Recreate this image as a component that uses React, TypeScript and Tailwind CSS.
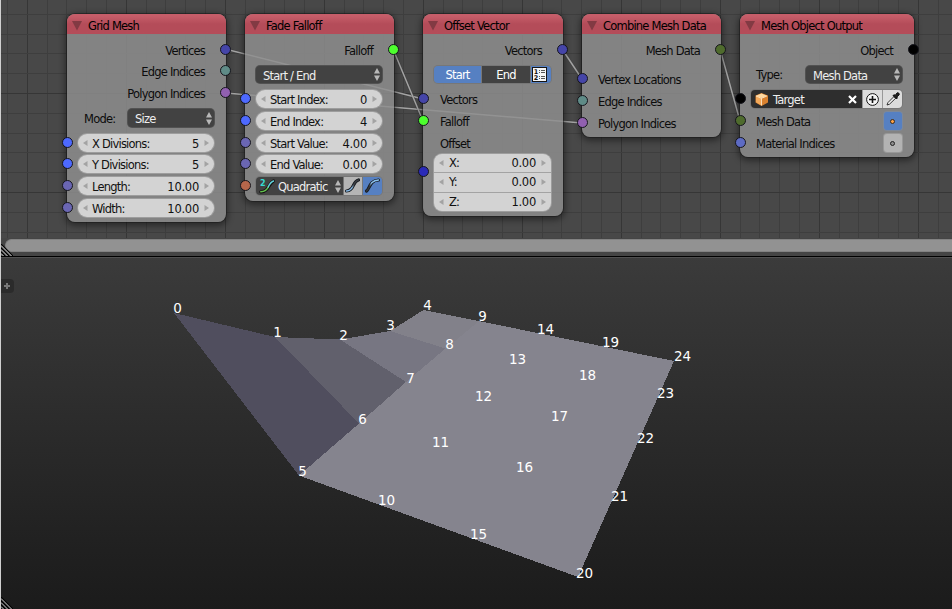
import type { ReactNode } from "react";

const COLORS = {
  vector: "#4545a8",
  teal: "#5f8b87",
  purple: "#9160b0",
  int: "#4d69ff",
  float: "#6a66b3",
  green: "#4dff2e",
  orange: "#b5664b",
  mesh: "#4f6b2d",
  black: "#000000",
  material: "#5d6bc4",
};

function Socket({ side, color }: { side: "l" | "r"; color: string }) {
  return (
    <span
      className={`absolute top-1/2 -mt-[7px] size-[11px] rounded-full border border-[#15151c] ${side === "l" ? "-left-[5px]" : "-right-[5px]"}`}
      style={{ backgroundColor: color }}
    />
  );
}

function Row({ className = "", children }: { className?: string; children: ReactNode }) {
  return <div className={`relative flex h-5 shrink-0 items-center ${className}`}>{children}</div>;
}

function Node({ title, className, children }: { title: string; className: string; children: ReactNode }) {
  return (
    <section
      className={`absolute top-[14px] flex flex-col rounded-[8px] bg-[#8f8f8f]/84 shadow-[0_0_0_1px_rgba(20,20,20,.45),0_2px_6px_2px_rgba(0,0,0,.42)] ${className}`}
    >
      <header className="flex h-5 shrink-0 items-center rounded-t-[8px] bg-linear-to-b from-[#c65d69] from-10% to-[#b44c59] to-50%">
        <svg className="ml-[5px] mt-[4px] size-[10px]" viewBox="0 0 10 10">
          <path d="M0 0H10L5 9.5Z" fill="#823a43" />
        </svg>
        <h2 className="ml-[6px] mt-[4px] text-black">{title}</h2>
      </header>
      {children}
    </section>
  );
}

function Arrow({ flip = false }: { flip?: boolean }) {
  return (
    <svg className="h-[6px] w-[5px] shrink-0" viewBox="0 0 5 6">
      <path d={flip ? "M0.5 0V6L5 3Z" : "M4.5 0V6L0 3Z"} fill="#a3a3a3" />
    </svg>
  );
}

function NumField({ label, value }: { label: string; value: string }) {
  return (
    <div className="mb-[2px] flex h-[18px] flex-1 items-center rounded-full bg-[#d3d3d3] px-[5px] text-[#111] shadow-[0_0_0_1px_#9d9d9d]">
      <Arrow />
      <span className="ml-[4px] mt-[2px]">{label}</span>
      <span className="ml-auto mr-[5px] mt-[2px] tracking-[-.25px]">{value}</span>
      <Arrow flip />
    </div>
  );
}

function UpDown() {
  return (
    <svg className="h-[13px] w-[6px] shrink-0" viewBox="0 0 6 13">
      <path d="M3 0L6 5.5H0ZM3 13L6 7.5H0Z" fill="#b8b8b8" />
    </svg>
  );
}

function Select({ label, className }: { label: string; className: string }) {
  return (
    <div className={`flex items-center rounded-[4px] bg-[#424242] pr-[2px] pl-[7px] text-[#eee] shadow-[0_0_0_1px_#525252] ${className}`}>
      <span className="mt-[2px]">{label}</span>
      <span className="ml-auto flex"><UpDown /></span>
    </div>
  );
}

function Curve({ d, id, from, to }: { d: string; id: string; from: string; to: string }) {
  return (
    <svg className="size-[17px]" viewBox="0 0 17 17" fill="none" strokeLinecap="round">
      <defs>
        <linearGradient id={id} x1="0" y1="1" x2="1" y2="0">
          <stop offset=".35" stopColor={from} />
          <stop offset=".6" stopColor={to} />
        </linearGradient>
      </defs>
      <path d={d} stroke="#15191f" strokeWidth="3.2" />
      <path d={d} stroke={`url(#${id})`} strokeWidth="1.5" />
    </svg>
  );
}

const grid = {
  x: Array.from({ length: 49 }, (_, i) => ({ at: Math.floor(126.3 + (i - 6) * 19.8), major: (i - 6) % 5 === 0 })),
  y: Array.from({ length: 12 }, (_, i) => ({ at: Math.floor(93.5 + (i - 4) * 19.82), major: (i - 4) % 5 === 0 })),
};

const links = ["M225 49L423 99", "M225 93L582 123", "M393 49L423 121", "M562 49L582 79", "M720 49L740 121"];

const faces = [
  { points: "299,475.5 357,421 404,379 444,346 479,321 674,361 578,577", fill: "#85848e" },
  { points: "390,331 423.5,310 479,321 445.5,349", fill: "#82818a" },
  { points: "340,339.5 390,331 445.5,348.5 406,382", fill: "#777682" },
  { points: "275,337 340,339.5 406,382 359,423.5", fill: "#61606c" },
  { points: "174,313 275,337 359,423.5 299,475.5", fill: "#504e5e" },
];

const vertexLabels = [
  [177, 308], [277, 332], [343, 335], [390, 325], [427, 305], [302, 471], [362, 419], [410, 378], [449, 344],
  [482, 316], [386, 500], [440, 442], [483, 396], [517, 359], [545, 329], [478, 534], [524, 467], [559, 416],
  [587, 375], [610, 342], [584, 573], [619, 496], [645, 438], [665, 393], [682, 356],
];

function GripCorner({ className }: { className: string }) {
  return (
    <svg className={`absolute left-px size-[12px] ${className}`} viewBox="0 0 12 12">
      <path d="M0 0L12 12M0 4L8 12M0 8L4 12" stroke="#000" strokeWidth="1.2" />
      <path d="M0 1.5L10.5 12M0 5.5L6.5 12M0 9.5L2.5 12" stroke="#c4c4c4" strokeWidth="1" />
    </svg>
  );
}

function NodeEditor() {
  return (
    <div className="relative h-[256px] shrink-0 overflow-hidden bg-[#484848]">
      <svg className="absolute inset-0" width="952" height="238" shapeRendering="crispEdges">
        {grid.x.map((l) => (
          <rect key={`x${l.at}`} x={l.at} y="0" width="1" height="238" fill={l.major ? "#363636" : "#3e3e3e"} />
        ))}
        {grid.y.map((l) => (
          <rect key={`y${l.at}`} x="0" y={l.at} width="952" height="1" fill={l.major ? "#363636" : "#3e3e3e"} />
        ))}
      </svg>
      <svg className="absolute inset-0" width="952" height="238" fill="none">
        {links.map((d) => (
          <g key={d}>
            <path d={d} stroke="#333" strokeOpacity=".4" strokeWidth="2.5" />
            <path d={d} stroke="#a4a4a4" strokeWidth="1.5" />
          </g>
        ))}
      </svg>

      <Node title="Grid Mesh" className="left-[67px] h-[208px] w-[159px]">
        <Row className="mt-[7px] justify-end pr-[21px]">Vertices<Socket side="r" color={COLORS.vector} /></Row>
        <Row className="mt-px justify-end pr-[21px]">Edge Indices<Socket side="r" color={COLORS.teal} /></Row>
        <Row className="mt-[2px] justify-end pr-[21px]">Polygon Indices<Socket side="r" color={COLORS.purple} /></Row>
        <Row className="mt-[5px] pl-[17px]">
          <span>Mode:</span>
          <Select label="Size" className="mr-[12px] mb-[2px] ml-auto h-[18px] w-[86px]" />
        </Row>
        <Row className="mt-[5px] pr-[12px] pl-[11px]"><NumField label="X Divisions:" value="5" /><Socket side="l" color={COLORS.int} /></Row>
        <Row className="mt-px pr-[12px] pl-[11px]"><NumField label="Y Divisions:" value="5" /><Socket side="l" color={COLORS.int} /></Row>
        <Row className="mt-[2px] pr-[12px] pl-[11px]"><NumField label="Length:" value="10.00" /><Socket side="l" color={COLORS.float} /></Row>
        <Row className="mt-[2px] pr-[12px] pl-[11px]"><NumField label="Width:" value="10.00" /><Socket side="l" color={COLORS.float} /></Row>
      </Node>

      <Node title="Fade Falloff" className="left-[245px] h-[187px] w-[149px]">
        <Row className="mt-[7px] justify-end pr-[21px]">Falloff<Socket side="r" color={COLORS.green} /></Row>
        <Row className="mt-[4px] pr-[12px] pl-[11px]"><Select label="Start / End" className="mb-px h-[17px] flex-1" /></Row>
        <Row className="mt-[5px] pr-[12px] pl-[11px]"><NumField label="Start Index:" value="0" /><Socket side="l" color={COLORS.int} /></Row>
        <Row className="mt-[2px] pr-[12px] pl-[11px]"><NumField label="End Index:" value="4" /><Socket side="l" color={COLORS.int} /></Row>
        <Row className="mt-[2px] pr-[12px] pl-[11px]"><NumField label="Start Value:" value="4.00" /><Socket side="l" color={COLORS.float} /></Row>
        <Row className="mt-px pr-[12px] pl-[11px]"><NumField label="End Value:" value="0.00" /><Socket side="l" color={COLORS.float} /></Row>
        <Row className="mt-[2px] pr-[12px] pl-[11px]">
          <div className="mb-[2px] flex h-[18px] flex-1 overflow-hidden rounded-[4px] shadow-[0_0_0_1px_#777]">
            <div className="flex flex-1 items-center bg-[#424242] pr-[2px] pl-[3px] text-[#eee]">
              <svg className="size-4" viewBox="0 0 16 16" fill="none">
                <path d="M1.8 13.8C10 13.5 9 6 14.5 3" stroke="#151515" strokeWidth="3.2" strokeLinecap="round" />
                <path d="M1.8 13.8C5.5 13.6 8 12 9.2 9" stroke="#62c04c" strokeWidth="1.5" strokeLinecap="round" />
                <path d="M9.2 9C10.5 6 12 4 14.5 3" stroke="#62d5dd" strokeWidth="1.5" strokeLinecap="round" />
                <text x="1" y="7.5" fontSize="8" fontWeight="700" fill="#35dcd2">2</text>
              </svg>
              <span className="ml-[3px] mt-[2px]">Quadratic</span>
              <span className="ml-auto flex"><UpDown /></span>
            </div>
            <div className="w-[19px] border-l border-[#777] bg-[#b5b5b5]">
              <Curve id="easeIn" from="#86b9e6" to="#3a3d42" d="M2.5 14C11 13.5 8 4.5 14.5 3" />
            </div>
            <div className="w-[20px] border-l border-[#777] bg-[#5680c2] pl-px">
              <Curve id="easeOut" from="#34373c" to="#8cc3ef" d="M2.5 14C6 12 5 3.5 14.5 3" />
            </div>
          </div>
          <Socket side="l" color={COLORS.orange} />
        </Row>
      </Node>

      <Node title="Offset Vector" className="left-[423px] h-[202px] w-[140px]">
        <Row className="mt-[7px] justify-end pr-[21px]">Vectors<Socket side="r" color={COLORS.vector} /></Row>
        <Row className="mt-[4px] pr-[12px] pl-[11px]">
          <div className="mb-px flex h-[17px] flex-1 overflow-hidden rounded-[4px] text-center leading-[19px] text-white shadow-[0_0_0_1px_#777]">
            <span className="w-[47px] bg-[#5680c2]">Start</span>
            <span className="flex-1 border-x border-[#777] bg-[#424242]">End</span>
            <span className="flex w-[20px] items-center bg-[#5680c2] pl-px">
              <svg className="size-[15px]" viewBox="0 0 15 15">
                <rect x=".5" y=".5" width="14" height="14" fill="#f6f6f6" stroke="#151515" />
                <text x="1.8" y="7" fontSize="6.5" fontWeight="700" fill="#111">1</text>
                <text x="1.8" y="13.2" fontSize="6.5" fontWeight="700" fill="#111">2</text>
                <path d="M7 3.5H8M9 3.5H13M7 5.5H8M9 5.5H13M7 9.5H8M9 9.5H13M7 11.5H8M9 11.5H13" stroke="#555" />
              </svg>
            </span>
          </div>
        </Row>
        <Row className="mt-[5px] pl-[17px]">Vectors<Socket side="l" color={COLORS.vector} /></Row>
        <Row className="mt-[2px] pl-[17px]">Falloff<Socket side="l" color={COLORS.green} /></Row>
        <Row className="mt-[2px] pl-[17px]">Offset</Row>
        <div className="mr-[12px] ml-[11px] flex h-[57px] flex-col divide-y divide-[#a3a3a3] overflow-hidden rounded-[8px] bg-[#d3d3d3] shadow-[0_0_0_1px_#9d9d9d]">
          {[["X:", "0.00"], ["Y:", "0.00"], ["Z:", "1.00"]].map(([k, v]) => (
            <div key={k} className="flex flex-1 items-center px-[5px] text-[#111]">
              <Arrow />
              <span className="ml-[5px]">{k}</span>
              <span className="mr-[5px] ml-auto tracking-[-.25px]">{v}</span>
              <Arrow flip />
            </div>
          ))}
        </div>
        <span className="absolute top-[152px] -left-[5px] size-[11px] rounded-full border border-[#15151c] bg-[#2a2ab8]" />
      </Node>

      <Node title="Combine Mesh Data" className="left-[582px] h-[123px] w-[139px]">
        <Row className="mt-[7px] justify-end pr-[21px]">Mesh Data<Socket side="r" color={COLORS.mesh} /></Row>
        <Row className="mt-[9px] pl-[16px]">Vertex Locations<Socket side="l" color={COLORS.vector} /></Row>
        <Row className="mt-[2px] pl-[16px]">Edge Indices<Socket side="l" color={COLORS.teal} /></Row>
        <Row className="mt-[2px] pl-[16px]">Polygon Indices<Socket side="l" color={COLORS.purple} /></Row>
      </Node>

      <Node title="Mesh Object Output" className="left-[740px] h-[143px] w-[174px]">
        <Row className="mt-[7px] justify-end pr-[21px]">Object<Socket side="r" color={COLORS.black} /></Row>
        <Row className="mt-[4px] pl-[16px]">
          <span>Type:</span>
          <Select label="Mesh Data" className="mr-[12px] mb-px ml-auto h-[17px] w-[96px]" />
        </Row>
        <Row className="mt-[5px] pr-[12px] pl-[11px]">
          <div className="mb-[2px] flex h-[18px] flex-1 overflow-hidden rounded-[4px] shadow-[0_0_0_1px_#777]">
            <div className="flex flex-1 items-center bg-[#2e2e2e] pr-[5px] pl-[4px] text-[#eee]">
              <svg className="size-[13px]" viewBox="0 0 13 13">
                <path d="M6.5 0L13 2.5V9.5L6.5 13L.5 9.5V2.5Z" fill="#d9812f" />
                <path d="M6.5 .5L12 2.7L6.5 5L1 2.7Z" fill="#ffd9a0" />
                <path d="M1 3L6.5 5.3V12.5L1 9.3Z" fill="#f4a95a" />
                <path d="M1 3L6.5 5.3V12.5M6.5 5.3L12 3" fill="none" stroke="#fff0d5" strokeWidth=".8" />
              </svg>
              <span className="ml-[5px] mt-[2px]">Target</span>
              <svg className="ml-auto size-[9px]" viewBox="0 0 9 9"><path d="M1 1L8 8M8 1L1 8" stroke="#fff" strokeWidth="2.2" /></svg>
            </div>
            <div className="flex w-[20px] items-center justify-center border-l border-[#999] bg-[#dcdcdc]">
              <svg className="size-[13px]" viewBox="0 0 13 13"><circle cx="6.5" cy="6.5" r="5.9" fill="#f5f5f5" stroke="#111" strokeWidth="1" /><path d="M6.5 3V10M3 6.5H10" stroke="#111" strokeWidth="1.6" /></svg>
            </div>
            <div className="flex w-[20px] items-center justify-center border-l border-[#999] bg-[#dcdcdc]">
              <svg className="size-[14px]" viewBox="0 0 14 14">
                <path d="M1 13L2 10.5L8 4.5L9.7 6.2L3.5 12.2Z" fill="#eee" stroke="#222" strokeWidth=".9" />
                <path d="M7 3.5L8.3 2.8L9.3 3.3L11 1C12 0 14 1.7 13 3L10.9 4.9L11.3 6L10.4 7Z" fill="#222" stroke="#111" />
              </svg>
            </div>
          </div>
          <Socket side="l" color={COLORS.black} />
        </Row>
        <Row className="mt-[2px] pr-[12px] pl-[16px]">
          <span>Mesh Data</span>
          <span className="mb-[2px] ml-auto flex size-[18px] items-center justify-center rounded-[3px] bg-[#5680c2] shadow-[0_0_0_1px_#7d8899]">
            <i className="mr-px size-[5px] rounded-full border border-[#3e2a18] bg-[#ffa345]" />
          </span>
          <Socket side="l" color={COLORS.mesh} />
        </Row>
        <Row className="mt-[2px] pr-[12px] pl-[16px]">
          <span>Material Indices</span>
          <span className="mb-[2px] ml-auto flex size-[18px] items-center justify-center rounded-[3px] bg-[#b3b3b3] shadow-[0_0_0_1px_#989898]">
            <i className="mr-px size-[5px] rounded-full border border-[#222] bg-[#8d8d8d]" />
          </span>
          <Socket side="l" color={COLORS.material} />
        </Row>
      </Node>

      <div className="absolute right-0 bottom-0 left-0 flex h-[18px] flex-col bg-[#454545]">
        <div className="mt-[1px] ml-[5px] h-[13px] rounded-l-full border-y border-l border-[#828282] bg-[#929292]" />
      </div>
      <GripCorner className="bottom-0" />
    </div>
  );
}

function Viewport() {
  return (
    <div className="relative h-[353px] border-t border-black bg-linear-to-b from-[#3b3b3b] to-[#1b1b1b] shadow-[inset_0_1px_0_#505050]">
      <svg className="absolute -top-px left-0" width="952" height="353" viewBox="0 256 952 353" shapeRendering="crispEdges">
        {faces.map((f) => (
          <polygon key={f.points} points={f.points} fill={f.fill} />
        ))}
      </svg>
      {vertexLabels.map(([x, y], i) => (
        <span
          key={i}
          className="absolute -translate-x-1/2 -translate-y-1/2 text-[13.5px] leading-4 tracking-normal text-white"
          style={{ left: x + 0.5, top: y - 257 }}
        >
          {i}
        </span>
      ))}
      <div className="absolute top-[22px] left-px flex h-[14px] w-[13px] items-center rounded-r-[4px] bg-[#2b2b2b] pl-[3px]">
        <svg className="size-[6px]" viewBox="0 0 6 6"><path d="M3 0V6M0 3H6" stroke="#777" strokeWidth="2" /></svg>
      </div>
      <GripCorner className="bottom-0" />
    </div>
  );
}

export default function App() {
  return (
    <main className="relative flex h-[609px] w-[952px] flex-col overflow-hidden font-['DejaVu_Sans',sans-serif] text-[11.5px] leading-4 tracking-[-.78px] whitespace-nowrap text-[#0c0c0c]">
      <NodeEditor />
      <Viewport />
      <div className="absolute inset-y-0 left-0 w-px bg-[#d0d0d0]" />
    </main>
  );
}
